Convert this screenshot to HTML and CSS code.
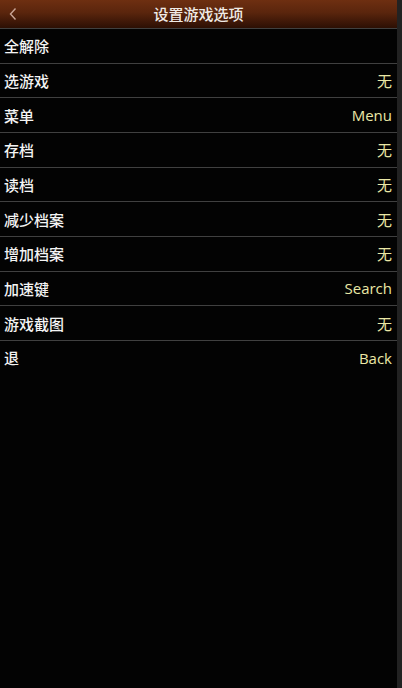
FILE: index.html
```html
<!DOCTYPE html>
<html lang="zh">
<head>
<meta charset="utf-8">
<title>设置游戏选项</title>
<link rel="stylesheet" href="styles.css">
</head>
<body>
<div class="screen">
  <div class="main">
    <header class="topbar">
      <svg class="back" width="10" height="14" viewBox="0 0 10 14"><path d="M7.5 1.5 L2.5 7 L7.5 12.5" fill="none" stroke="#c9a596" stroke-width="1.4"/></svg>
      <div class="title">设置游戏选项</div>
    </header>
    <ul class="list">
      <li class="row"><span class="label">全解除</span><span class="value"></span></li>
      <li class="row"><span class="label">选游戏</span><span class="value">无</span></li>
      <li class="row"><span class="label">菜单</span><span class="value">Menu</span></li>
      <li class="row"><span class="label">存档</span><span class="value">无</span></li>
      <li class="row"><span class="label">读档</span><span class="value">无</span></li>
      <li class="row"><span class="label">减少档案</span><span class="value">无</span></li>
      <li class="row"><span class="label">增加档案</span><span class="value">无</span></li>
      <li class="row"><span class="label">加速键</span><span class="value">Search</span></li>
      <li class="row"><span class="label">游戏截图</span><span class="value">无</span></li>
      <li class="row"><span class="label">退</span><span class="value">Back</span></li>
    </ul>
  </div>
  <div class="scrollstrip"></div>
</div>
</body>
</html>
```
FILE: styles.css
```css
html, body {
  margin: 0;
  padding: 0;
  background: #030303;
  height: 100%;
}
body {
  font-family: "Open Sans", "Noto Sans CJK SC", sans-serif;
  color: #f2f2f2;
}
.screen {
  display: flex;
  height: 688px;
  width: 402px;
}
.main {
  flex: 1;
  display: flex;
  flex-direction: column;
  min-width: 0;
}
.scrollstrip {
  width: 5px;
  background: #222222;
}
.topbar {
  height: 28px;
  box-sizing: border-box;
  background: linear-gradient(to bottom, #6e2f11 0%, #5a250d 45%, #2c0f04 100%);
  display: flex;
  align-items: center;
  justify-content: center;
  position: relative;
}
.back {
  position: absolute;
  left: 8px;
  top: 7px;
}
.title {
  font-family: "Noto Sans CJK SC", sans-serif;
  font-size: 15px;
  font-weight: 500;
  color: #f0ebe6;
  line-height: 1;
  margin-top: -1px;
}
.list {
  list-style: none;
  margin: 0;
  padding: 0;
}
.row {
  height: 34.67px;
  box-sizing: border-box;
  border-top: 1px solid #404040;
  display: flex;
  align-items: center;
  justify-content: space-between;
  padding: 0 5px 0 4px;
  font-size: 15px;
}
.label {
  font-family: "Noto Sans CJK SC", sans-serif;
  font-weight: 500;
  color: #f4f4f4;
}
.value {
  color: #ebe8a6;
}
```
